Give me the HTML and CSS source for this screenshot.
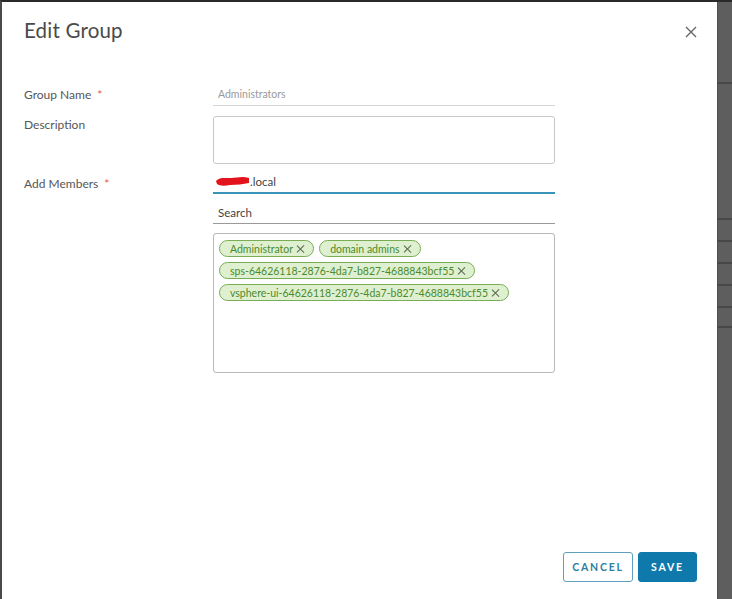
FILE: index.html
```html
<!DOCTYPE html>
<html lang="en">
<head>
  <meta charset="UTF-8">
  <title>Edit Group</title>
  <link rel="stylesheet" href="styles.css">
</head>
<body>
  <div class="screen">
    <div class="modal">
      <div class="modal-header">
        <h1>Edit Group</h1>
        <button class="close" aria-label="Close">
          <svg width="12" height="12" viewBox="0 0 12 12"><path d="M1 1L11 11M11 1L1 11" stroke="#666" stroke-width="1.4" fill="none"/></svg>
        </button>
      </div>

      <div class="form">
        <div class="row row-name">
          <label>Group Name <span class="req">*</span></label>
          <div class="field line">
            <span class="value muted">Administrators</span>
          </div>
        </div>

        <div class="row row-desc">
          <label>Description</label>
          <div class="textarea"></div>
        </div>

        <div class="row row-members">
          <label>Add Members <span class="req">*</span></label>
          <div class="members">
            <div class="field line active">
              <span class="value">
                <svg class="scribble" width="35" height="12" viewBox="0 0 35 12"><path d="M1 6C4 2 10 3 16 3C22 3 27 1 34 3L34 8C28 9 22 10 15 10C9 11 5 11 2 9Z" fill="#e2131b"/></svg>.local
              </span>
            </div>
            <div class="field line search">
              <span class="value">Search</span>
            </div>
            <div class="tagbox">
              <span class="tag">Administrator <i class="x"></i></span>
              <span class="tag">domain admins <i class="x"></i></span>
              <span class="tag">sps-64626118-2876-4da7-b827-4688843bcf55 <i class="x"></i></span>
              <span class="tag">vsphere-ui-64626118-2876-4da7-b827-4688843bcf55 <i class="x"></i></span>
            </div>
          </div>
        </div>
      </div>

      <div class="modal-footer">
        <button class="btn btn-outline">CANCEL</button>
        <button class="btn btn-primary">SAVE</button>
      </div>
    </div>

    <div class="behind">
      <div class="strip" style="height:80px"></div>
      <div class="strip" style="height:134px"></div>
      <div class="strip" style="height:20px"></div>
      <div class="strip" style="height:20px"></div>
      <div class="strip" style="height:20px"></div>
      <div class="strip" style="height:20px"></div>
      <div class="strip" style="height:18px"></div>
    </div>
  </div>
</body>
</html>
```

FILE: styles.css
```css
body {
  margin: 0;
  font-family: Lato, "Open Sans", sans-serif;
  background: #5e5e5e;
  overflow: hidden;
}
.screen {
  display: flex;
  height: 599px;
  border-top: 2px solid #2a2a2a;
  border-left: 2px solid #4a4a4a;
  box-sizing: border-box;
}
.modal {
  width: 715px;
  background: #fff;
  display: flex;
  flex-direction: column;
  box-sizing: border-box;
  padding: 0 20px 17px 22px;
}
.modal-header {
  display: flex;
  justify-content: space-between;
  align-items: flex-start;
  height: 80px;
}
.modal-header h1 {
  margin: 16px 0 0;
  font-size: 20.5px;
  font-weight: 400;
  color: #4a4a4a;
  letter-spacing: 0.2px;
}
.close {
  border: none;
  background: none;
  padding: 0;
  margin-top: 24px;
  width: 12px;
  height: 12px;
  cursor: pointer;
}
.close svg {
  display: block;
}
.row {
  display: grid;
  grid-template-columns: 189px 342px;
}
.row label {
  font-size: 12px;
  color: #565656;
}
.req {
  color: #e35a3e;
  margin-left: 3px;
}
.field {
  box-sizing: border-box;
  height: 24px;
  display: flex;
  align-items: center;
  padding: 0 5px;
}
.line {
  border-bottom: 1px solid #d6d6d6;
}
.value {
  font-size: 11.5px;
  color: #444;
  display: flex;
  align-items: center;
}
.muted {
  color: #9a9a9a;
  font-size: 10.5px;
}
.row-name label {
  padding-top: 5px;
}
.row-desc {
  margin-top: 10px;
}
.row-desc label {
  padding-top: 1px;
}
.textarea {
  height: 48px;
  border: 1px solid #c8c8c8;
  border-radius: 3px;
  box-sizing: border-box;
}
.row-members {
  margin-top: 6px;
}
.row-members label {
  padding-top: 6px;
}
.members .active {
  height: 24px;
  padding: 0 2px;
  border-bottom: 2px solid #3a93bb;
}
.scribble {
  display: block;
}
.members .search {
  height: 30px;
  padding-top: 8px;
  border-bottom-color: #9a9a9a;
}
.tagbox {
  margin-top: 9px;
  height: 140px;
  border: 1px solid #b8b8b8;
  border-radius: 3px;
  box-sizing: border-box;
  padding: 6px 5px;
  display: flex;
  flex-wrap: wrap;
  align-content: flex-start;
  gap: 5px 5px;
}
.tag {
  display: inline-flex;
  align-items: center;
  height: 17px;
  box-sizing: border-box;
  padding: 0 8px 0 10px;
  border: 1px solid #79ad55;
  border-radius: 9px;
  background: #dff0d0;
  color: #4c8a2b;
  font-size: 10.5px;
  white-space: nowrap;
}
.tag:nth-child(2) {
  margin-right: 100px;
}
.x {
  position: relative;
  width: 8px;
  height: 8px;
  margin-left: 4px;
}
.x::before,
.x::after {
  content: "";
  position: absolute;
  left: 3px;
  top: -1px;
  width: 1.2px;
  height: 10px;
  background: #5a6a50;
  transform: rotate(45deg);
}
.x::after {
  transform: rotate(-45deg);
}
.modal-footer {
  margin-top: auto;
  display: flex;
  justify-content: flex-end;
  gap: 5px;
}
.btn {
  height: 30px;
  font-family: Lato, "Open Sans", sans-serif;
  font-size: 10.5px;
  font-weight: 700;
  letter-spacing: 1.8px;
  border-radius: 3px;
  cursor: pointer;
}
.btn-outline {
  width: 70px;
  background: #fff;
  color: #2f7ea3;
  border: 1px solid #5fa0be;
}
.btn-primary {
  width: 59px;
  background: #0f79ab;
  color: #fff;
  border: 1px solid #0f79ab;
}
.behind {
  flex: 1;
  background: #5e5e5e;
  border-left: 1px solid #4f4f4f;
}
.strip {
  border-bottom: 2px solid #474747;
}
```
